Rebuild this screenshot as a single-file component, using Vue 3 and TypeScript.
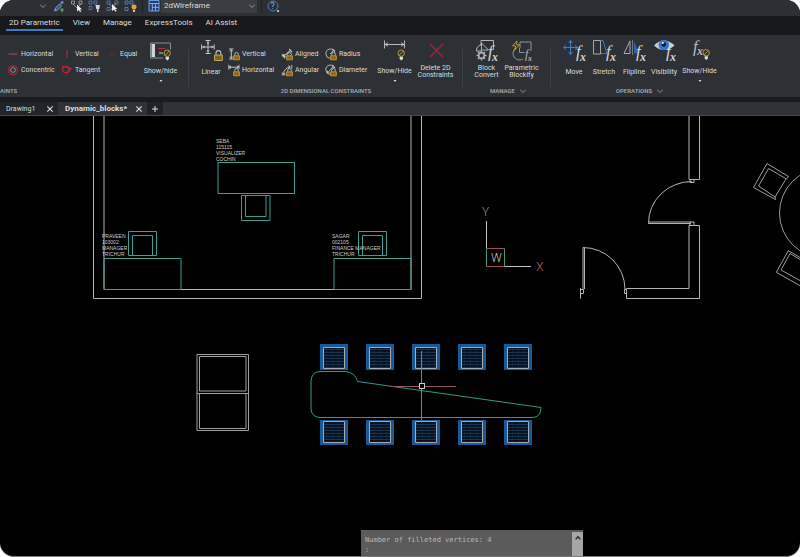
<script setup lang="ts">
import { h, ref } from 'vue'

interface Shape {
  d: string
  s?: string
  f?: string
  w?: number
}
interface Letter {
  t: string
  x: number
  y: number
  size: number
  c?: string
}
interface Art {
  box: number
  shapes: Shape[]
  letters?: Letter[]
}

const grey = '#c3c5c7'
const gold = '#b99a3a'
const blue = '#3f7fd0'
const red = '#b8243f'

const lock = (x: number, y: number): Shape[] => [
  { d: `M${x + 1.5} ${y + 3}v-1.5a1.8 1.8 0 0 1 3.6 0v1.5`, s: grey, w: 0.9 },
  { d: `M${x + 0.4} ${y + 3}h5.8v4h-5.8z`, s: '#c9982f', f: '#8a691f', w: 0.9 },
]
const bulb = (x: number, y: number): Shape[] => [
  { d: `M${x} ${y + 3.2}a3.2 3.2 0 1 1 6.4 0a3.2 3.2 0 1 1 -6.4 0M${x + 1} ${y + 5.4}l4.4 -4.4`, s: gold, w: 1 },
  { d: `M${x + 1.6} ${y + 6.8}h3.4v2.2l-1.7 1.6l-1.7 -1.6z`, f: '#d8dadb' },
]
const fx = (x: number, y: number, size: number, c = '#d3d5d7', drop = 4): Letter[] => [
  { t: 'f', x, y, size, c },
  { t: 'x', x: x + Math.round(size * 0.25), y: y + drop, size: Math.round(size * 0.68), c },
]
const cell = (x: number, y: number): string => `M${x} ${y}h3v3h-3z`

const art: Record<string, Art> = {
  chevron: { box: 8, shapes: [{ d: 'M1.2 2.8l2.8 2.6l2.8 -2.6', s: '#9a9da0', w: 0.9 }] },
  caret: { box: 8, shapes: [{ d: 'M2.5 3h3l-1.5 2z', f: '#d8d8d8' }] },
  close: { box: 8, shapes: [{ d: 'M1.3 1.3l5.4 5.4M6.7 1.3l-5.4 5.4', s: '#dcdcdc', w: 1.1 }] },
  plus: { box: 8, shapes: [{ d: 'M4 1v6M1 4h6', s: '#dcdcdc', w: 1 }] },
  up: { box: 8, shapes: [{ d: 'M1.6 5.4l2.4 -2.6l2.4 2.6', s: '#222', w: 1.3 }] },

  brush: {
    box: 14,
    shapes: [
      { d: 'M2.5 12l1 -3l4 -4l2 2l-4 4z', s: '#9fb6dd', f: '#35548c', w: 0.8 },
      { d: 'M8 4l2 -2.5l2 2l-2.5 2z', f: '#5d8bd8' },
      { d: 'M10 9v4M8 11h4', s: '#55b848', w: 1.2 },
    ],
  },
  pick: {
    box: 14,
    shapes: [
      { d: cell(1.5, 2) + cell(9, 2) + 'M3 5l4 4l4 -4', s: '#a4a8ac', w: 0.8 },
      { d: 'M7 5.5v7l1.8 -1.6l1.3 2.3l1 -.6l-1.2 -2.1h2.2z', f: '#eee' },
    ],
  },
  blocks: {
    box: 14,
    shapes: [
      { d: cell(1, 2) + cell(6, 2) + cell(1, 7.5), s: '#5683c8', w: 0.8 },
      { d: 'M7.5 6h4.5l-.8 4h-.7v3h-1.5v-3h-.8z', f: '#d5d7da' },
    ],
  },
  blocksPick: {
    box: 14,
    shapes: [
      { d: cell(1, 2) + cell(9, 2) + cell(1, 8.5), s: '#5683c8', w: 0.8 },
      { d: 'M3 5l8 7M10 4l-5 7', s: '#aaa', w: 0.7 },
      { d: 'M6 5v7l1.8 -1.6l1.5 2.3l1 -.6l-1.4 -2.1h2.4z', f: '#eee' },
    ],
  },
  blocksBulb: {
    box: 14,
    shapes: [
      { d: cell(1, 2) + cell(6, 2) + cell(1, 8.5), s: '#5683c8', w: 0.9 },
      { d: 'M7.4 8a2.6 2.6 0 1 1 5.2 0l-1.2 2.5h-2.8z', f: '#e3a92c' },
      { d: 'M9 11h2v2h-2z', f: '#ccc' },
    ],
  },
  layout: {
    box: 14,
    shapes: [
      { d: 'M2 1.5h10v10.5h-10z', f: '#1c3d74', s: '#6f9ee0', w: 1 },
      { d: 'M2 4.5h10M5.3 4.5v7.5M8.6 4.5v7.5M5.3 8.3h6.7', s: '#a9c6f2', w: 0.8 },
    ],
  },
  help: {
    box: 14,
    shapes: [
      { d: 'M2 7a5 5 0 1 1 10 0a5 5 0 1 1 -10 0', s: '#4c83cf', w: 0.9 },
      { d: 'M11 11h2v2h-2z', f: '#9fc0ee' },
    ],
    letters: [{ t: '?', x: 4.6, y: 10, size: 9, c: '#7facea' }],
  },

  hline: { box: 12, shapes: [{ d: 'M1.5 6h9', s: '#c4485a', w: 1.2 }] },
  vline: { box: 12, shapes: [{ d: 'M6 2v8', s: '#a9283c', w: 1.2 }] },
  equal: { box: 12, shapes: [{ d: 'M4 5h5M4 7h5', s: '#7d2435', w: 0.8 }] },
  concentric: {
    box: 12,
    shapes: [
      { d: 'M1.5 6a4.5 4.5 0 1 1 9 0a4.5 4.5 0 1 1 -9 0', s: '#a8223a', w: 1.3 },
      { d: 'M3.6 6a2.4 2.4 0 1 1 4.8 0a2.4 2.4 0 1 1 -4.8 0', s: '#a9a9ab', w: 0.8 },
    ],
  },
  tangent: {
    box: 12,
    shapes: [
      { d: 'M1.5 5.5a3.2 3.2 0 1 1 6.4 0a3.2 3.2 0 1 1 -6.4 0', s: red, w: 1.3 },
      { d: 'M1 2.2l9.5 2.2l-5.5 6.4', s: red, w: 1 },
      { d: 'M7.5 3.2l4 1.2l-3 1.6z', f: red },
    ],
  },
  dimV: {
    box: 12,
    shapes: [
      { d: 'M1 1h4.6M1 11h4.6M3.3 1.5v9M2 3.4l1.3 -1.7l1.3 1.7M2 8.6l1.3 1.7l1.3 -1.7', s: grey, w: 1 },
      ...lock(5.2, 4.8),
    ],
  },
  dimH: {
    box: 12,
    shapes: [
      { d: 'M.8 .8v4.8M11 .8v4M1 3.2h9.8M3 2l-1.8 1.2l1.8 1.2M9 2l1.8 1.2l-1.8 1.2', s: grey, w: 1 },
      ...lock(5.2, 4.8),
    ],
  },
  dimA: {
    box: 12,
    shapes: [
      { d: 'M.8 6.4l3.2 4M8.2 .8l2.8 3.4M2.4 8.4l7.2 -6M3 6l-.8 2.5l2.6 .2', s: grey, w: 1.1 },
      ...lock(5.2, 4.8),
    ],
  },
  dimAng: {
    box: 12,
    shapes: [
      { d: 'M.6 10.8h4M2.5 10.6a8 8 0 0 1 6.3 -7.6M10.8 .8v4M7 1.6l2.4 1.3l-2 1.8M1 8.4l1.4 2.2l1.6 -1.8', s: grey, w: 0.9 },
      ...lock(5.2, 4.8),
    ],
  },
  dimR: {
    box: 12,
    shapes: [
      { d: 'M5 10.4a4.7 4.7 0 1 1 5 -6.2M5 6l4 -3.8M7 2h2.3v2.3', s: grey, w: 0.9 },
      ...lock(5.2, 4.8),
    ],
  },
  dimD: {
    box: 12,
    shapes: [
      { d: 'M5 10.4a4.7 4.7 0 1 1 5 -6.2M2.6 8.8l6 -6.6M6.8 2.2h1.9v2M2.5 6.8v2.1h2', s: grey, w: 0.9 },
      ...lock(5.2, 4.8),
    ],
  },

  panel: {
    box: 24,
    shapes: [
      { d: 'M1.5 4h20v15h-20z', s: '#8b8e91', w: 1 },
      { d: 'M2.5 5h3.5v13h-3.5z', f: '#d2d3d4' },
      { d: 'M9 9.5h7l2 2', s: '#b0303f', w: 1 },
      { d: 'M10 14h4', s: grey, w: 1 },
      { d: 'M14 10.500h8v11h-8z', f: '#2d3034' },
      ...bulb(15, 11),
    ],
  },
  linear: {
    box: 24,
    shapes: [
      { d: 'M9 1.5v13M3 8h12M6.5 1.5h5M6.5 14.5h5M2.6 5.5v5M15.2 5.5v5', s: grey, w: 1 },
      { d: 'M7.6 4.4l1.4 -2l1.4 2zM7.6 11.6l1.4 2l1.4 -2zM5.6 6.6l-2 1.4l2 1.4zM12.4 6.6l2 1.4l-2 1.4z', f: grey },
      { d: 'M17 16v-2a2.4 2.4 0 0 1 4.8 0v2', s: grey, w: 1.1 },
      { d: 'M15.5 16h7.8v5.5h-7.8z', s: '#c2aa4d', f: '#75642a', w: 1 },
    ],
  },
  dimBulb: {
    box: 24,
    shapes: [
      { d: 'M1.5 1.5v8M21.5 1.5v8M2 5.5h19M5 3.8l-3 1.7l3 1.7M18 3.8l3 1.7l-3 1.7', s: grey, w: 0.9 },
      ...bulb(15, 11),
    ],
  },
  cross: { box: 24, shapes: [{ d: 'M6 5l13 13M19 5l-13 13', s: '#a82843', w: 1.1 }] },
  convert: {
    box: 24,
    shapes: [
      { d: 'M6 6v-4.500h12.500v9M6 6a6 6 0 0 0 -4.500 6h5M6.500 4v7h7l-7 -7', s: grey, w: 0.9 },
      { d: 'M3.7 16.500a2.800 2.800 0 1 1 5.600 0a2.800 2.800 0 1 1 -5.600 0', s: '#b4b6b8', w: 1.5 },
      { d: 'M6.500 11.500v2M6.500 19.500v2M1.500 16.500h2M9.500 16.500h2M3 13l1.500 1.500M8.500 18.500l1.500 1.500M10 13l-1.500 1.500M4.500 18.500l-1.500 1.500', s: '#b4b6b8', w: 1.3 },
    ],
    letters: fx(13, 18, 17),
  },
  blockify: {
    box: 24,
    shapes: [
      { d: 'M10 9v-6h11v9M6 9a6.500 6.500 0 1 0 7 11M9.500 9v4.500h5', s: '#9c9fa2', w: 0.9 },
      { d: 'M7 2l-4.5 5h3.2l-1.4 4.500l5.200 -5.800h-3z', s: '#c29a32', w: 1 },
    ],
    letters: fx(15, 19, 12, '#b4b6b8', 3),
  },
  move: {
    box: 24,
    shapes: [
      { d: 'M8.500 1.5v14M1.500 8.5h14M6.500 4l2 -2.5l2 2.5M6.500 13l2 2.5l2 -2.5M4 6.5l-2.5 2l2.5 2M13 6.500l2.500 2l-2.500 2', s: blue, w: 1 },
    ],
    letters: fx(14, 18, 17),
  },
  stretch: {
    box: 24,
    shapes: [
      { d: 'M1.500 1.5h7v13.500h-7z', s: '#a6a8aa', w: 1 },
      { d: 'M8.500 1.500l2.500 0l4 13h-6', s: blue, w: 0.9 },
    ],
    letters: fx(14, 18, 17),
  },
  flip: {
    box: 24,
    shapes: [
      { d: 'M8 2v12.500h-6z', s: '#a6a8aa', w: 1 },
      { d: 'M10.500 1v15', s: '#8a8c8f', w: 0.8 },
      { d: 'M12 2v12.500h5z', f: '#315fb0' },
    ],
    letters: fx(14, 18, 17),
  },
  eye: {
    box: 24,
    shapes: [
      { d: 'M2 6.500q10 -10 20.500 0q-10.500 9 -20.500 0z', f: '#c9cdd3' },
      { d: 'M6.500 6a5.300 5.300 0 1 1 10.600 0a5.300 5.300 0 1 1 -10.600 0', f: '#3577cf' },
      { d: 'M9.500 5.500a2.300 2.300 0 1 1 4.600 0a2.300 2.300 0 1 1 -4.600 0', f: '#0b1930' },
      { d: 'M9.800 4a1 1 0 1 1 2 0a1 1 0 1 1 -2 0', f: '#fff' },
    ],
    letters: fx(14, 18, 17),
  },
  fxBulb: { box: 24, shapes: bulb(15, 10.5), letters: fx(5, 13, 17, '#b9bbbd', 3) },
}

const Glyph = (props: { name: string }) => {
  const a = art[props.name]
  return h(
    'svg',
    { class: 'glyph', width: a.box, height: a.box, viewBox: `0 0 ${a.box} ${a.box}`, 'aria-hidden': 'true' },
    [
      ...a.shapes.map((p) =>
        h('path', { d: p.d, fill: p.f ?? 'none', stroke: p.s ?? 'none', 'stroke-width': p.w ?? 1 }),
      ),
      ...(a.letters ?? []).map((l) =>
        h(
          'text',
          {
            x: l.x,
            y: l.y,
            fill: l.c,
            'font-size': l.size,
            'font-family': l.t === '?' ? 'Roboto, sans-serif' : '"Liberation Serif", serif',
            'font-style': l.t === '?' ? 'normal' : 'italic',
            'font-weight': l.t === 'x' ? 'bold' : 'normal',
          },
          l.t,
        ),
      ),
    ],
  )
}
Glyph.props = ['name']

const tabs = ['2D Parametric', 'View', 'Manage', 'ExpressTools', 'AI Assist']
const activeTab = ref('2D Parametric')
const quick = ['brush', 'pick', 'blocks', 'blocksPick', 'blocksBulb']

interface Tool {
  icon: string
  label: string
}
interface Big extends Tool {
  menu?: boolean
}
const geometric: Tool[] = [
  { icon: 'hline', label: 'Horizontal' },
  { icon: 'vline', label: 'Vertical' },
  { icon: 'equal', label: 'Equal' },
  { icon: 'concentric', label: 'Concentric' },
  { icon: 'tangent', label: 'Tangent' },
]
const dimensional: Tool[] = [
  { icon: 'dimV', label: 'Vertical' },
  { icon: 'dimA', label: 'Aligned' },
  { icon: 'dimR', label: 'Radius' },
  { icon: 'dimH', label: 'Horizontal' },
  { icon: 'dimAng', label: 'Angular' },
  { icon: 'dimD', label: 'Diameter' },
]
const manage: Big[] = [
  { icon: 'convert', label: 'Block\nConvert' },
  { icon: 'blockify', label: 'Parametric\nBlockify' },
]
const operations: Big[] = [
  { icon: 'move', label: 'Move' },
  { icon: 'stretch', label: 'Stretch' },
  { icon: 'flip', label: 'Flipline' },
  { icon: 'eye', label: 'Visibility' },
  { icon: 'fxBulb', label: 'Show/Hide', menu: true },
]

const people = [
  { x: 216, y: 143, lines: ['SEBA', '115115', 'VISUALIZER', 'COCHIN'] },
  { x: 102, y: 238, lines: ['PRAVEEN', '103002', 'MANAGER', 'TRICHUR'] },
  { x: 332, y: 238, lines: ['SAGAR', '002105', 'FINANCE MANAGER', 'TRICHUR'] },
]
const seats = [320, 366, 412, 458, 504]
const command = ref('')
</script>

<template>
  <div class="app">
    <header class="quickbar">
      <select class="layer" aria-label="Layer"><option></option></select>
      <Glyph name="chevron" />
      <div class="quick">
        <button v-for="q in quick" :key="q" type="button" :aria-label="q"><Glyph :name="q" /></button>
      </div>
      <i class="bar"></i>
      <button type="button" aria-label="Layout"><Glyph name="layout" /></button>
      <div class="style-box">
        <select aria-label="Visual style"><option>2dWireframe</option></select>
        <Glyph name="chevron" />
      </div>
      <i class="bar"></i>
      <button type="button" aria-label="Help"><Glyph name="help" /></button>
    </header>

    <nav class="tabs">
      <button
        v-for="t in tabs"
        :key="t"
        type="button"
        :class="{ on: t === activeTab }"
        @click="activeTab = t"
      >{{ t }}</button>
    </nav>

    <div class="ribbon">
      <section class="group geo">
        <div class="tools">
          <div class="small geo-grid">
            <button v-for="g in geometric" :key="g.label" type="button"><Glyph :name="g.icon" />{{ g.label }}</button>
          </div>
          <button type="button" class="big w-wide">
            <Glyph name="panel" /><span>Show/hide</span><Glyph name="caret" />
          </button>
        </div>
        <h2>AINTS</h2>
      </section>
      <section class="group dim">
        <div class="tools">
          <button type="button" class="big w-mid"><Glyph name="linear" /><span>Linear</span></button>
          <div class="small dim-grid">
            <button v-for="g in dimensional" :key="g.label" type="button"><Glyph :name="g.icon" />{{ g.label }}</button>
          </div>
          <button type="button" class="big w-wide">
            <Glyph name="dimBulb" /><span>Show/Hide</span><Glyph name="caret" />
          </button>
          <button type="button" class="big w-wide"><Glyph name="cross" /><span>Delete 2D<br />Constraints</span></button>
        </div>
        <h2>2D DIMENSIONAL CONSTRAINTS</h2>
      </section>
      <section class="group man">
        <div class="tools">
          <button v-for="m in manage" :key="m.label" type="button" class="big w-mid">
            <Glyph :name="m.icon" /><span>{{ m.label }}</span>
          </button>
        </div>
        <h2>MANAGE <Glyph name="chevron" /></h2>
      </section>
      <section class="group ops">
        <div class="tools">
          <button v-for="o in operations" :key="o.label" type="button" class="big" :class="o.menu ? 'w-wide' : 'w-slim'">
            <Glyph :name="o.icon" /><span>{{ o.label }}</span><Glyph v-if="o.menu" name="caret" />
          </button>
        </div>
        <h2>OPERATIONS <Glyph name="chevron" /></h2>
      </section>
    </div>

    <div class="files">
      <div class="file first"><a href="#">Drawing1</a><button type="button" aria-label="Close Drawing1"><Glyph name="close" /></button></div>
      <div class="file current"><a href="#">Dynamic_blocks*</a><button type="button" aria-label="Close Dynamic_blocks"><Glyph name="close" /></button></div>
      <button type="button" class="add" aria-label="New drawing"><Glyph name="plus" /></button>
    </div>

    <main class="canvas">
      <svg class="plan" viewBox="0 116 800 440" preserveAspectRatio="xMinYMin slice">
        <defs>
          <pattern id="weave" width="6" height="3" patternUnits="userSpaceOnUse">
            <path d="M0 1.500h6" stroke="#19344e" stroke-width="1" />
            <path d="M2.500 0v1" stroke="#122b42" stroke-width="1" />
          </pattern>
        </defs>

        <g class="wall">
          <path d="M93.500 116V298.500H421.500V116M104 116V289.500H411V116" />
          <path d="M689 116V179.500H699.500V116M689 225.500H699.500V298.500H626.500V288.500H689Z" />
          <path d="M690 179.500v3h4v-3M692 181.500A43.500 41.500 0 0 0 648.500 223.500H691M648.500 222H691M690 225v-3h4v3" />
          <path d="M583 289V247.500M584.500 289V248M583 247.500A42 42 0 0 1 625 289M580.500 288V298.500M580.500 289.500h3v4h-3M627 289.500h-2.500v4h2.500" />
        </g>

        <g class="seat">
          <path d="M753.500 187.500L767 163.500L788.500 176.500L786.500 179L768.700 168.500L758.500 186L775 197L775.500 199.500Z M786 179L775 197" />
          <path d="M800 285.700L776.300 272.300L788.300 250.700L800 257.500M800 280.500L781 270L790 253.500L800 259.500" />
          <circle cx="824.500" cy="213" r="45" />
        </g>

        <g class="desk">
          <rect x="218" y="162.500" width="76.500" height="31" />
          <path d="M241.500 195.500h28.500v25h-28.500zM245.500 195.500h20.500v21h-20.500z" />
          <path d="M104 258.500h77v31h-77zM128.500 231.500h28v24h-28zM132.500 235.500h20v20h-20z" />
          <path d="M334 258.500h77v31h-77zM358.500 231.500h28v24h-28zM362.500 235.500h20v20h-20z" />
        </g>

        <g class="names">
          <template v-for="p in people" :key="p.lines[0]">
            <text v-for="(l, i) in p.lines" :key="l" :x="p.x" :y="p.y + i * 6">{{ l }}</text>
          </template>
        </g>

        <g class="ucs">
          <path d="M486.500 221V248M504 266.500H531" stroke="#c4c4c4" />
          <path d="M486.500 248.500H504.500M486.500 266.500H504.500" stroke="#a8485a" />
          <path d="M486.500 248.500V266.500M504.500 248.500V266.500" stroke="#3c9a78" />
          <text x="482" y="216" fill="#6fa596">Y</text>
          <text x="536" y="271" fill="#c0605c">X</text>
          <text x="491" y="262" fill="#c8c8c8">W</text>
        </g>

        <g class="cabinet">
          <path d="M197 354.500h51.500v76h-51.500zM199.500 356.500h46.500v34.500h-46.500zM197 393.500h51.500M199.500 393.500v35h46.500v-35" />
        </g>

        <g v-for="x in seats" :key="x" class="chair">
          <path :d="`M${x} 344h28v26h-28z`" class="pad" />
          <path :d="`M${x + 3.5} 347.500h21v21h-21z`" class="mesh" />
          <path :d="`M${x + 3.5} 347.500h21v21h-21z`" class="rim" />
          <path :d="`M${x} 420h28v25h-28z`" class="pad" />
          <path :d="`M${x + 3.5} 421.500h21v21h-21z`" class="mesh" />
          <path :d="`M${x + 3.5} 421.500h21v21h-21z`" class="rim" />
        </g>

        <path
          class="table"
          d="M320 371.500H345Q355 372 357.500 381.500L541 407.500Q541 417.500 532 417.500H320Q311 417 311 408V381Q311.500 372 320 371.500Z"
        />
        <path d="M390 386.500H456" stroke="#8c5a64" />
        <path d="M421.500 351V420" stroke="#6f8a80" />
        <rect x="419.500" y="383.500" width="5" height="5" fill="#000" stroke="#d0c8c8" />
      </svg>

      <section class="console">
        <div class="log">
          <p>Number of filleted vertices: 4</p>
          <label>:<input v-model="command" aria-label="Command" /></label>
        </div>
        <button type="button" aria-label="Scroll up"><Glyph name="up" /></button>
      </section>
    </main>
  </div>
</template>

<style>
body {
  margin: 0;
  background: #fff;
}
</style>

<style scoped>
.app {
  display: flex;
  flex-direction: column;
  box-sizing: border-box;
  min-height: 100vh;
  border-bottom: 1px solid #777;
  border-radius: 14px;
  overflow: hidden;
  background: #000;
  color: #dcddde;
  font: 7px/8px Roboto, sans-serif;
}
button,
select,
input {
  margin: 0;
  padding: 0;
  border: 0;
  background: none;
  color: inherit;
  font: inherit;
  appearance: none;
  outline: none;
}
button {
  display: flex;
  align-items: center;
  white-space: nowrap;
}
.glyph,
svg {
  display: block;
  flex: none;
}
.glyph {
  overflow: visible;
}
.quickbar {
  display: flex;
  align-items: center;
  height: 11px;
  padding-bottom: 5px;
  background: #2c3035;
}
.layer {
  width: 39px;
}
.quick {
  display: flex;
  gap: 4px;
  margin: 0 4px 0 5px;
}
.bar {
  width: 1px;
  height: 14px;
  margin-right: 4px;
  background: #1d2024;
}
.style-box {
  display: flex;
  align-items: center;
  justify-content: space-between;
  width: 92px;
  height: 14px;
  margin-right: 4px;
  padding: 0 1px 0 3px;
  background: #3a3d41;
}
.style-box select {
  flex: 1;
  height: 12px;
  font-size: 8px;
}
.tabs {
  display: flex;
  gap: 7px;
  height: 19px;
  padding: 0 6px;
  background: #17191d;
}
.tabs button {
  box-sizing: border-box;
  height: 15px;
  padding: 0 3px;
  border-bottom: 2px solid transparent;
  font-size: 8px;
}
.tabs .on {
  border-bottom-color: #4877c2;
}
.ribbon {
  display: flex;
  height: 62px;
  border-bottom: 5px solid #181b20;
  background: #2d3034;
}
.group {
  position: relative;
  box-sizing: border-box;
  padding-top: 4px;
}
.group:not(:last-child)::after {
  content: '';
  position: absolute;
  right: 0;
  top: 14px;
  width: 1px;
  height: 38px;
  background: #3d4044;
}
.tools {
  display: flex;
  height: 46px;
}
h2 {
  display: flex;
  justify-content: center;
  gap: 4px;
  margin: 0;
  color: #a5a7aa;
  font-size: 6px;
  font-weight: 600;
  line-height: 12px;
  white-space: nowrap;
}
h2 .glyph {
  margin-top: 2px;
}
.geo {
  width: 189px;
  padding-left: 7px;
}
.geo h2 {
  justify-content: flex-start;
  margin-left: -7px;
}
.dim {
  width: 274px;
  padding-left: 7px;
}
.dim h2 {
  padding-right: 7px;
}
.man {
  width: 88px;
  padding-left: 6px;
}
.man h2 {
  padding-right: 3px;
}
.ops {
  flex: 1;
  padding-left: 8px;
}
.ops h2 {
  width: 162px;
}
.small {
  display: grid;
  grid-template-rows: 15px 15px;
  row-gap: 1px;
  align-content: start;
  padding-top: 7px;
}
.small button {
  gap: 2px;
}
.geo-grid {
  grid-template-columns: 54px 45px 34px;
}
.dim-grid {
  grid-template-columns: 53px 44px 50px;
  padding-left: 1px;
}
.dim-grid .glyph {
  margin-left: 1px;
}
.big {
  flex-direction: column;
  height: 46px;
  text-align: center;
}
.big span {
  display: flex;
  align-items: center;
  height: 16px;
  padding-top: 1px;
  line-height: 7px;
  white-space: pre;
}
.big .glyph + span + .glyph {
  margin-top: -1px;
}
.w-wide {
  width: 41px;
}
.w-mid {
  width: 30px;
}
.man .w-mid {
  width: 35px;
}
.w-slim {
  width: 30px;
}
.files {
  display: flex;
  height: 13px;
  border-bottom: 1px solid #45484c;
  background: #2f3237;
}
.file {
  display: flex;
  align-items: center;
  justify-content: space-between;
  padding: 0 4px 0 6px;
}
.file a {
  color: inherit;
  text-decoration: none;
}
.first {
  width: 48px;
  background: #212429;
}
.current {
  width: 78px;
  padding-left: 7px;
  font-size: 8px;
  font-weight: 700;
}
.add {
  width: 16px;
  justify-content: center;
  background: #1f2226;
}
.canvas {
  position: relative;
  display: flex;
  flex: 1;
}
.plan {
  width: 100%;
  fill: none;
}
.wall {
  stroke: #b4b4b4;
}
.seat {
  stroke: #9c9c9c;
}
.desk {
  stroke: #3b9f92;
}
.names {
  fill: #cfcfcf;
  font: 5px 'Liberation Sans', sans-serif;
}
.ucs {
  font: 300 12px Roboto, sans-serif;
}
.cabinet {
  stroke: #a2a2a2;
}
.pad {
  fill: #175a97;
}
.mesh {
  fill: #06121f;
}
.rim {
  fill: url(#weave);
  stroke: #9fabb5;
}
.table {
  stroke: #2f9c85;
}
.console {
  position: absolute;
  bottom: 0;
  left: 361px;
  display: flex;
  width: 222px;
  height: 26px;
  background: #5b5b5b;
  color: #b9b9b9;
  font: 7px/10px 'DejaVu Sans Mono', monospace;
}
.log {
  flex: 1;
  padding: 5px 0 0 4px;
}
.log p {
  margin: 0;
}
.log label {
  display: flex;
}
.log input {
  flex: 1;
}
.console button {
  align-items: flex-start;
  justify-content: center;
  width: 11px;
  margin-top: 2px;
  padding-top: 2px;
  background: #a6a6a6;
}
</style>
